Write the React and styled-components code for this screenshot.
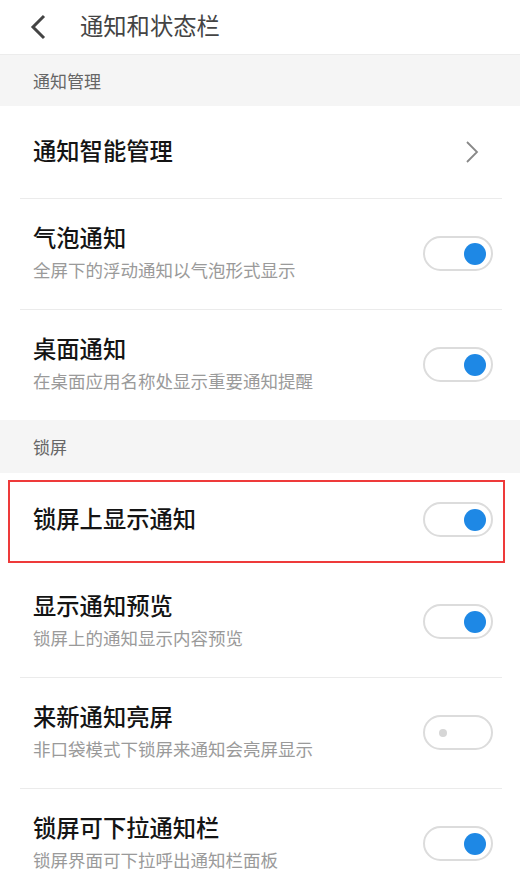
import React from "react";
import styled, { createGlobalStyle } from "styled-components";

const Global = createGlobalStyle`
  body {
    margin: 0;
    background: #fff;
    font-family: "Noto Sans CJK SC", "Noto Sans", sans-serif;
  }
`;

const Page = styled.div`
  width: 520px;
  background: #fff;
`;

const Header = styled.div`
  height: 55px;
  display: flex;
  align-items: center;
  border-bottom: 1px solid #ececec;
  box-sizing: border-box;
`;

const Back = styled.div`
  width: 80px;
  display: flex;
  justify-content: flex-start;
  padding-left: 28px;
  box-sizing: border-box;
`;

const HeaderTitle = styled.div`
  font-size: 23.3px;
  color: #444;
  margin-top: -4px;
`;

const Section = styled.div`
  height: ${(p) => p.h}px;
  background: #f5f5f5;
  display: flex;
  align-items: center;
  padding-left: 33px;
  font-size: 17px;
  color: #666;
`;

const Row = styled.div`
  position: relative;
  height: ${(p) => p.h}px;
  display: flex;
  align-items: center;
  padding: 0 27px 0 33px;
  box-sizing: border-box;
  &::before {
    content: "";
    display: ${(p) => (p.divider ? "block" : "none")};
    position: absolute;
    top: 0;
    left: 20px;
    right: 18px;
    height: 1px;
    background: #ebebeb;
  }
  &::after {
    content: "";
    display: ${(p) => (p.highlight ? "block" : "none")};
    position: absolute;
    top: 7px;
    left: 8px;
    right: 15px;
    bottom: 3px;
    border: 2px solid #ee3a3a;
  }
`;

const Texts = styled.div`
  flex: 1;
  display: flex;
  flex-direction: column;
  margin-top: -4px;
`;

const Title = styled.div`
  font-size: 23.3px;
  font-weight: 500;
  color: #141414;
  line-height: 30px;
`;

const Sub = styled.div`
  font-size: 17.5px;
  color: #9a9a9a;
  line-height: 22px;
  margin-top: 7px;
`;

const Track = styled.div`
  width: 70px;
  height: 35px;
  box-sizing: border-box;
  border: 2px solid #dcdcdc;
  border-radius: 18px;
  background: #fff;
  display: flex;
  align-items: center;
  justify-content: ${(p) => (p.on ? "flex-end" : "flex-start")};
  padding: 0 ${(p) => (p.on ? 5 : 14)}px;
`;

const Knob = styled.div`
  width: ${(p) => (p.on ? 22 : 8)}px;
  height: ${(p) => (p.on ? 22 : 8)}px;
  border-radius: 50%;
  background: ${(p) => (p.on ? "#1e88e5" : "#d6d6d6")};
`;

const Toggle = ({ on }) => (
  <Track on={on}>
    <Knob on={on} />
  </Track>
);

const Chevron = () => (
  <svg width="14" height="22" viewBox="0 0 14 22" style={{ marginRight: 14 }}>
    <path d="M2 1 L12 11 L2 21" fill="none" stroke="#888" strokeWidth="1.8" />
  </svg>
);

const Item = ({ title, sub, on, divider, highlight }) => (
  <Row h={sub ? 111 : 93} divider={divider} highlight={highlight}>
    <Texts>
      <Title>{title}</Title>
      {sub && <Sub>{sub}</Sub>}
    </Texts>
    <Toggle on={on} />
  </Row>
);

export default function App() {
  return (
    <Page>
      <Global />
      <Header>
        <Back>
          <svg width="20" height="26" viewBox="0 0 20 26">
            <path d="M16 2 L5 13 L16 24" fill="none" stroke="#444" strokeWidth="3" />
          </svg>
        </Back>
        <HeaderTitle>通知和状态栏</HeaderTitle>
      </Header>
      <Section h={51}>通知管理</Section>
      <Row h={92}>
        <Texts>
          <Title>通知智能管理</Title>
        </Texts>
        <Chevron />
      </Row>
      <Item divider title="气泡通知" sub="全屏下的浮动通知以气泡形式显示" on />
      <Item divider title="桌面通知" sub="在桌面应用名称处显示重要通知提醒" on />
      <Section h={53}>锁屏</Section>
      <Item highlight title="锁屏上显示通知" on />
      <Item title="显示通知预览" sub="锁屏上的通知显示内容预览" on />
      <Item divider title="来新通知亮屏" sub="非口袋模式下锁屏来通知会亮屏显示" on={false} />
      <Item divider title="锁屏可下拉通知栏" sub="锁屏界面可下拉呼出通知栏面板" on />
    </Page>
  );
}
